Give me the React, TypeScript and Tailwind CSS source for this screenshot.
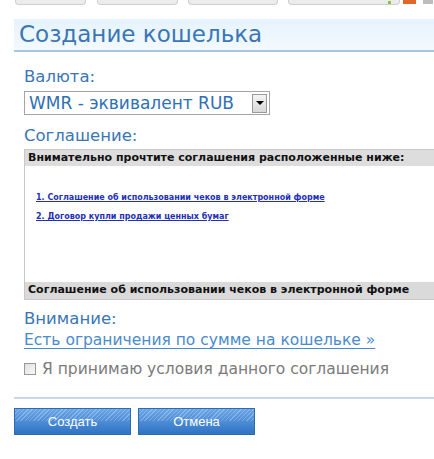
import { useState } from 'react';

const links = [
  '1. Соглашение об использовании чеков в электронной форме',
  '2. Договор купли продажи ценных бумаг',
];

function TopTabs() {
  return (
    <div className="flex h-[5px] items-start">
      <div className="ml-[15px] h-[5px] w-[71px] rounded-b-[4px] border border-t-0 border-[#cfcfcf] bg-[#ececec]" />
      <div className="ml-[11px] h-[5px] w-[81px] rounded-b-[4px] border border-t-0 border-[#cfcfcf] bg-[#ececec]" />
      <div className="ml-[10px] h-[5px] w-[90px] rounded-b-[4px] border border-t-0 border-[#cfcfcf] bg-[#ececec]" />
      <div className="ml-[10px] h-[5px] w-[112px] rounded-b-[4px] border border-t-0 border-[#cfcfcf] bg-[#ececec]" />
      <div className="ml-[-12px] mt-[1px] h-[3px] w-[3px] bg-[#8fc24a]" />
      <div className="ml-[12px] h-[4px] w-[13px] bg-[#e0662a]" />
      <div className="ml-[7px] h-[4px] w-[10px] bg-[#bdbdbd]" />
    </div>
  );
}

function BlueButton({ label }: { label: string }) {
  return (
    <button
      className="relative h-[27px] w-[117px] overflow-hidden border border-[#2d6cb0] bg-gradient-to-b from-[#6aa6e6] to-[#2f73c4] text-[13px] text-white"
      style={{ fontFamily: '"Liberation Sans", Arial, sans-serif' }}
    >
      <span className="absolute inset-x-0 top-0 h-[12px] bg-[repeating-linear-gradient(135deg,rgba(255,255,255,0.25)_0px,rgba(255,255,255,0.25)_1px,transparent_1px,transparent_3px)]" />
      <span className="relative">{label}</span>
    </button>
  );
}

export default function App() {
  const [accepted, setAccepted] = useState(false);

  return (
    <div
      className="h-[459px] w-[434px] overflow-hidden bg-white"
      style={{ fontFamily: '"DejaVu Sans", Verdana, sans-serif' }}
    >
      <TopTabs />

      {/* Title band */}
      <div className="ml-[14px] mt-[14px] flex h-[33px] items-center border-b-2 border-[#a6c6e2] bg-gradient-to-b from-[#e6f3fc] to-[#f3f9fe] pl-[5px]">
        <h1 className="text-[23px] leading-none text-[#3a76b6]">Создание кошелька</h1>
      </div>

      <div className="ml-[24px] mt-[16px]">
        <div className="text-[16.5px] leading-[18px] text-[#3a76b6]">Валюта:</div>

        <div className="mt-[5px] flex h-[24px] w-[246px] items-center border border-[#a5a5a5] pl-[4px] pr-[2px]">
          <span className="flex-1 text-[17px] leading-none text-[#2e6fb5]">WMR - эквивалент RUB</span>
          <span className="flex h-[19px] w-[15px] items-center justify-center border border-[#9a9a9a] bg-gradient-to-b from-[#f4f4f4] to-[#d8d8d8]">
            <span className="h-0 w-0 border-x-[4px] border-t-[4px] border-x-transparent border-t-black" />
          </span>
        </div>

        <div className="mt-[12px] text-[16.5px] leading-[18px] text-[#3a76b6]">Соглашение:</div>

        {/* Agreement box */}
        <div className="mt-[4px] flex h-[151px] flex-col border border-r-0 border-[#c8c8c8]">
          <div className="flex h-[16px] items-center bg-[#dddddd] pl-[3px] text-[11px] font-bold text-[#111]">
            Внимательно прочтите соглашения расположенные ниже:
          </div>
          <div className="flex flex-1 flex-col gap-[9px] pl-[11px] pt-[27px]">
            {links.map((l) => (
              <a key={l} href="#" className="text-[8px] font-bold leading-[10px] text-[#1f2fb8] underline">
                {l}
              </a>
            ))}
          </div>
          <div className="flex h-[17px] items-center bg-[#dadada] pl-[3px] text-[11px] font-bold text-[#111]">
            Соглашение об использовании чеков в электронной форме
          </div>
        </div>

        <div className="mt-[10px] text-[16.5px] leading-[18px] text-[#3a76b6]">Внимание:</div>
        <a href="#" className="mt-[2px] block text-[15.5px] leading-[20px] text-[#4a8bcb] underline decoration-1 underline-offset-[3px]">
          Есть ограничения по сумме на кошельке »
        </a>

        <label className="mt-[9px] flex items-center gap-[6px] text-[15.5px] leading-[20px] text-[#7a7a7a]">
          <input
            type="checkbox"
            checked={accepted}
            onChange={() => setAccepted(!accepted)}
            className="h-[12px] w-[12px] appearance-none border border-[#999] bg-gradient-to-br from-[#e0e0e0] to-[#f8f8f8]"
          />
          Я принимаю условия данного соглашения
        </label>
      </div>

      <div className="ml-[14px] mt-[18px] h-[2px] bg-[#c9d8e8]" />

      <div className="ml-[14px] mt-[9px] flex gap-[7px]">
        <BlueButton label="Создать" />
        <BlueButton label="Отмена" />
      </div>
    </div>
  );
}
